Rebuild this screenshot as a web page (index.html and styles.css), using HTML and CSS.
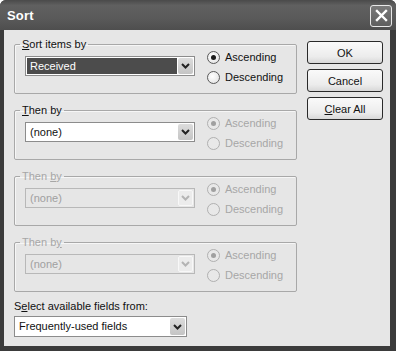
FILE: index.html
```html
<!DOCTYPE html>
<html lang="en">
  <head>
    <meta charset="UTF-8" />
    <title>Sort</title>
    <link rel="stylesheet" href="styles.css">
  </head>
  <body>
    <div class="window">
      <div class="titlebar">
        <span class="title">Sort</span>
        <button class="close" aria-label="Close">
          <svg width="13" height="13" viewBox="0 0 13 13">
            <path d="M2 2 L11 11 M11 2 L2 11" stroke="#fff" stroke-width="2.4" stroke-linecap="square" />
          </svg>
        </button>
      </div>
      <div class="client">
        <div class="main">
          <div class="groups">
            <fieldset class="group">
              <legend><u>S</u>ort items by</legend>
              <div class="row">
                <div class="combo selected">
                  <span class="value">Received</span>
                  <span class="arrow"><svg width="9" height="6" viewBox="0 0 9 6"><path d="M1 1 L4.5 4.5 L8 1" fill="none" stroke="#222" stroke-width="2" /></svg></span>
                </div>
                <div class="radios">
                  <label class="radio"><span class="dot checked"></span>Ascending</label>
                  <label class="radio"><span class="dot"></span>Descending</label>
                </div>
              </div>
            </fieldset>
            <fieldset class="group">
              <legend><u>T</u>hen by</legend>
              <div class="row">
                <div class="combo">
                  <span class="value">(none)</span>
                  <span class="arrow"><svg width="9" height="6" viewBox="0 0 9 6"><path d="M1 1 L4.5 4.5 L8 1" fill="none" stroke="#222" stroke-width="2" /></svg></span>
                </div>
                <div class="radios disabled">
                  <label class="radio"><span class="dot checked"></span>Ascending</label>
                  <label class="radio"><span class="dot"></span>Descending</label>
                </div>
              </div>
            </fieldset>
            <fieldset class="group disabled">
              <legend>Then <u>b</u>y</legend>
              <div class="row">
                <div class="combo">
                  <span class="value">(none)</span>
                  <span class="arrow"><svg width="9" height="6" viewBox="0 0 9 6"><path d="M1 1 L4.5 4.5 L8 1" fill="none" stroke="#b4b4b4" stroke-width="2" /></svg></span>
                </div>
                <div class="radios disabled">
                  <label class="radio"><span class="dot checked"></span>Ascending</label>
                  <label class="radio"><span class="dot"></span>Descending</label>
                </div>
              </div>
            </fieldset>
            <fieldset class="group disabled">
              <legend>Then b<u>y</u></legend>
              <div class="row">
                <div class="combo">
                  <span class="value">(none)</span>
                  <span class="arrow"><svg width="9" height="6" viewBox="0 0 9 6"><path d="M1 1 L4.5 4.5 L8 1" fill="none" stroke="#b4b4b4" stroke-width="2" /></svg></span>
                </div>
                <div class="radios disabled">
                  <label class="radio"><span class="dot checked"></span>Ascending</label>
                  <label class="radio"><span class="dot"></span>Descending</label>
                </div>
              </div>
            </fieldset>
          </div>
          <div class="buttons">
            <button class="btn">OK</button>
            <button class="btn">Cancel</button>
            <button class="btn"><u>C</u>lear All</button>
          </div>
        </div>
        <div class="fields-label">S<u>e</u>lect available fields from:</div>
        <div class="combo wide">
          <span class="value">Frequently-used fields</span>
          <span class="arrow"><svg width="9" height="6" viewBox="0 0 9 6"><path d="M1 1 L4.5 4.5 L8 1" fill="none" stroke="#222" stroke-width="2" /></svg></span>
        </div>
      </div>
    </div>
  </body>
</html>
```

FILE: styles.css
```css
body {
  margin: 0;
  padding: 0;
  background-color: #ffffff;
  font-family: "Liberation Sans", Arial, sans-serif;
  font-size: 11px;
  color: #111;
}
.window {
  width: 396px;
  height: 351px;
  box-sizing: border-box;
  display: flex;
  flex-direction: column;
  background-color: #3b3b3b;
  padding: 0 6px 5px 4px;
  border-radius: 6px 6px 0 0;
}
.titlebar {
  height: 30px;
  margin: 0 -6px 0 -4px;
  padding: 0 4px 0 7px;
  display: flex;
  align-items: center;
  justify-content: space-between;
  background: linear-gradient(#4a4a4a, #606060 18%, #5a5a5a 60%, #4e4e4e);
  border-radius: 6px 6px 0 0;
}
.title {
  color: #fff;
  font-weight: bold;
  font-size: 13px;
  letter-spacing: 0.2px;
  margin-top: 1px;
}
.close {
  width: 22px;
  height: 22px;
  padding: 0;
  border: 1px solid #e8e8e8;
  border-radius: 3px;
  background: linear-gradient(#7a7a7a, #5e5e5e);
  display: flex;
  align-items: center;
  justify-content: center;
  margin-top: 1px;
}
.client {
  flex: 1;
  background-color: #e6e6e6;
  padding: 8px 7px 0 10px;
}
.main {
  display: flex;
  justify-content: space-between;
}
.groups {
  display: flex;
  flex-direction: column;
  gap: 10px;
  width: 283px;
}
.group {
  margin: 0;
  height: 56px;
  box-sizing: border-box;
  padding: 0 10px;
  border: 1px solid #a8a8a8;
  border-radius: 2px;
  box-shadow: inset 1px 1px 0 #f6f6f6;
}
.group legend {
  padding: 0 2px;
  margin-left: -5px;
  line-height: 13px;
  color: #111;
}
.group.disabled legend {
  color: #a6a6a6;
}
.row {
  display: flex;
  align-items: flex-start;
}
.combo {
  width: 170px;
  height: 20px;
  box-sizing: border-box;
  border: 1px solid #8c8c8c;
  background-color: #fff;
  padding: 1px;
  display: flex;
  align-items: stretch;
  margin-top: 5px;
}
.combo .value {
  flex: 1;
  padding-left: 3px;
  line-height: 16px;
  white-space: nowrap;
}
.combo.selected .value {
  background-color: #4c4c4c;
  color: #fff;
  margin-right: 1px;
}
.combo .arrow {
  width: 15px;
  display: flex;
  align-items: center;
  justify-content: center;
  background: linear-gradient(#dcdcdc, #c4c4c4);
  border-radius: 2px;
}
.group.disabled .combo {
  background-color: #e6e6e6;
  border-color: #b8b8b8;
  color: #a0a0a0;
}
.group.disabled .combo .arrow {
  background: #ececec;
  border: 1px solid #f8f8f8;
  box-sizing: border-box;
}
.radios {
  margin-left: 12px;
  margin-top: -4px;
  display: flex;
  flex-direction: column;
}
.radio {
  height: 20px;
  display: flex;
  align-items: center;
  gap: 5px;
}
.dot {
  width: 11px;
  height: 11px;
  border-radius: 50%;
  border: 1px solid #5a5a5a;
  background: radial-gradient(circle at 40% 40%, #ffffff, #dedede);
  display: flex;
  align-items: center;
  justify-content: center;
}
.dot.checked::after {
  content: "";
  width: 5px;
  height: 5px;
  border-radius: 50%;
  background-color: #1a1a1a;
}
.radios.disabled {
  color: #a6a6a6;
}
.radios.disabled .dot {
  border-color: #b0b0b0;
  background: #e8e8e8;
}
.radios.disabled .dot.checked::after {
  background-color: #a0a0a0;
}
.buttons {
  display: flex;
  flex-direction: column;
  gap: 5px;
  margin-top: 3px;
}
.btn {
  width: 76px;
  height: 23px;
  border: 1px solid #2a2a2a;
  border-radius: 3px;
  background: linear-gradient(#fafafa, #ececec 70%, #d8d8d8);
  font-family: "Liberation Sans", Arial, sans-serif;
  font-size: 11px;
  color: #111;
  padding: 0;
}
.fields-label {
  margin-top: 8px;
  line-height: 13px;
}
.combo.wide {
  width: 173px;
  height: 21px;
  margin-top: 3px;
}
```
